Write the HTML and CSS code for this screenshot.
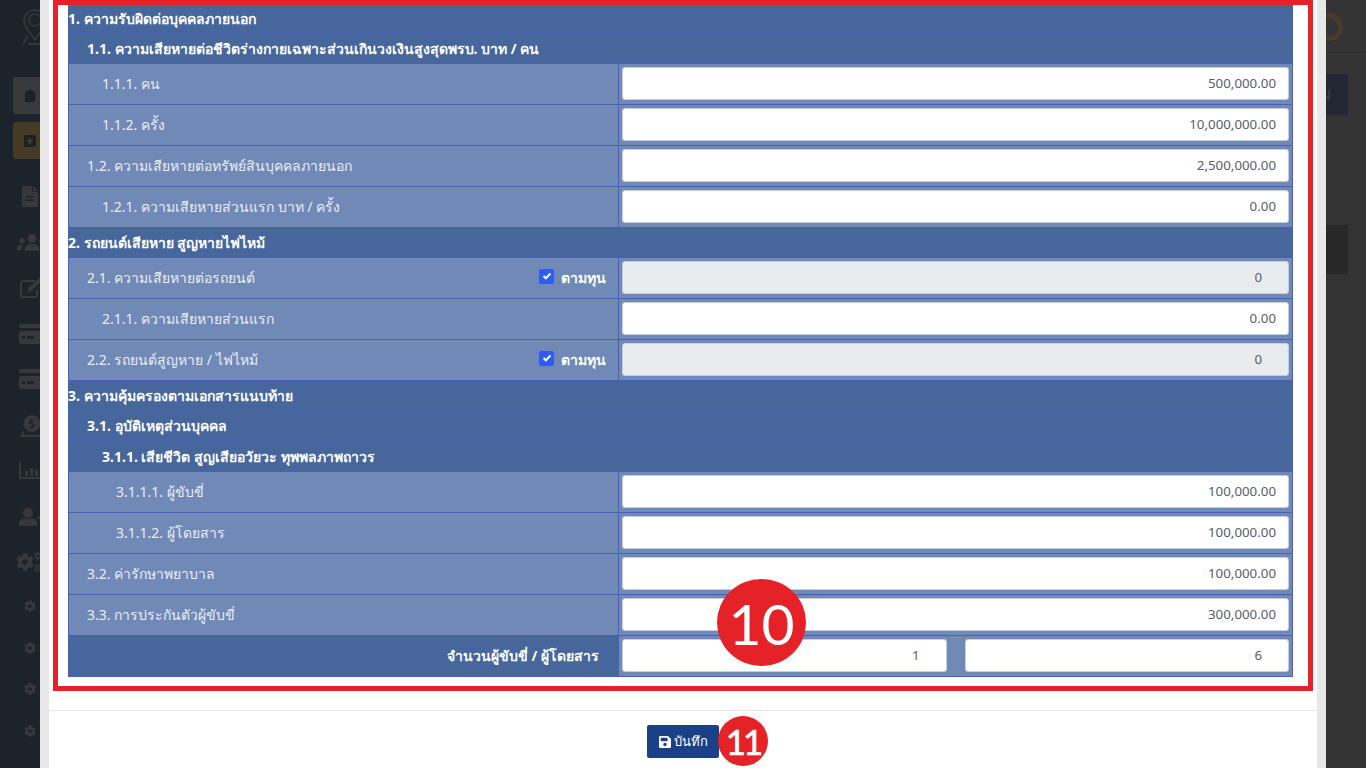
FILE: index.html
```html
<!DOCTYPE html>
<html lang="th">
<head>
    <meta charset="UTF-8">
    <title>ความคุ้มครอง</title>
    <link rel="stylesheet" href="styles.css">
</head>
<body>
    <svg class="sprites" aria-hidden="true">
        <symbol id="i-cog" viewBox="0 0 512 512"><path d="M487.4 315.7l-42.6-24.6c4.3-23.2 4.3-47 0-70.2l42.6-24.6c4.9-2.8 7.1-8.6 5.5-14-11.1-35.6-30-67.8-54.7-94.6-3.8-4.1-10-5.1-14.8-2.3L380.8 110c-17.9-15.4-38.5-27.3-60.8-35.1V25.8c0-5.6-3.9-10.5-9.4-11.7-36.7-8.2-74.3-7.8-109.2 0-5.5 1.2-9.4 6.1-9.4 11.7V75c-22.2 7.9-42.8 19.8-60.8 35.1L88.7 85.5c-4.9-2.8-11-1.9-14.8 2.3-24.7 26.7-43.6 58.9-54.7 94.6-1.7 5.4.6 11.2 5.5 14L67.3 221c-4.3 23.2-4.3 47 0 70.2l-42.6 24.6c-4.9 2.8-7.1 8.6-5.5 14 11.1 35.6 30 67.8 54.7 94.6 3.8 4.1 10 5.1 14.8 2.3l42.6-24.6c17.9 15.4 38.5 27.3 60.8 35.1v49.2c0 5.6 3.9 10.5 9.4 11.7 36.7 8.2 74.3 7.8 109.2 0 5.5-1.2 9.4-6.1 9.4-11.7v-49.2c22.2-7.9 42.8-19.8 60.8-35.1l42.6 24.6c4.9 2.8 11 1.9 14.8-2.3 24.7-26.7 43.6-58.9 54.7-94.6 1.5-5.5-.7-11.3-5.6-14.1zM256 336c-44.1 0-80-35.9-80-80s35.9-80 80-80 80 35.9 80 80-35.9 80-80 80z"/></symbol>
        <symbol id="i-card" viewBox="0 0 26 20"><rect x="0" y="0" width="26" height="4" rx="1.5"/><path d="M2 7h22a2 2 0 0 1 2 2v9a2 2 0 0 1-2 2H2a2 2 0 0 1-2-2V9a2 2 0 0 1 2-2zM3 12v3h3v-3zM8 12v3h7v-3z" fill-rule="evenodd"/></symbol>
    </svg>

    <!-- page behind the modal -->
    <div class="page">
        <aside class="sidebar">
            <svg class="logo" viewBox="0 0 26 36" fill="none" stroke="#36383b" stroke-width="1.6"><path d="M13 1a11 11 0 0 1 11 11c0 6-6 11-11 19C8 23 2 18 2 12A11 11 0 0 1 13 1z"/><circle cx="13" cy="11" r="6"/><path d="M1 35l5-8M25 35l-5-8M6 35h14" stroke-width="2"/></svg>
            <div class="side-btn side-btn-gray">
                <svg width="10" height="13" viewBox="0 0 10 13" fill="#1c2128"><path d="M1 2h2.500a1.500 1.500 0 0 1 3 0H9a1 1 0 0 1 1 1v9a1 1 0 0 1-1 1H1a1 1 0 0 1-1-1V3a1 1 0 0 1 1-1z"/></svg>
            </div>
            <div class="side-btn side-btn-orange">
                <svg width="12" height="12" viewBox="0 0 12 12" fill="#1c2128"><path d="M1.500 0h9A1.500 1.500 0 0 1 12 1.500v9a1.500 1.500 0 0 1-1.500 1.500h-9A1.500 1.500 0 0 1 0 10.500v-9A1.500 1.500 0 0 1 1.500 0zM5 3v2H3v2h2v2h2V7h2V5H7V3z" fill-rule="evenodd"/></svg>
            </div>
            <svg class="nav-icon nav-file" viewBox="0 0 16 21"><path d="M1 0h9v6h6v14a1 1 0 0 1-1 1H1a1 1 0 0 1-1-1V1a1 1 0 0 1 1-1zM11 0l5 5h-5zM4 10v1.500h8V10zM4 13.500V15h8v-1.500z" fill-rule="evenodd"/></svg>
            <svg class="nav-icon nav-users" viewBox="0 0 30 17"><circle cx="15" cy="4.500" r="4.500"/><path d="M8 17v-2c0-3 2.500-5 5-5h4c2.500 0 5 2 5 5v2z"/><circle cx="5" cy="7" r="2.800"/><circle cx="25" cy="7" r="2.800"/><path d="M0 16v-2c0-2 1.500-3 3-3h3c-1 1-1.500 2.500-1.500 5zM30 16v-2c0-2-1.500-3-3-3h-3c1 1 1.500 2.500 1.500 5z"/></svg>
            <svg class="nav-icon nav-edit" viewBox="0 0 24 20" fill="none" stroke="#36383b" stroke-width="2.200"><path d="M15 3H3a2 2 0 0 0-2 2v12a2 2 0 0 0 2 2h12a2 2 0 0 0 2-2v-5"/><path d="M8 12l1 0L22 0" stroke-width="4"/></svg>
            <svg class="nav-icon nav-card"><use href="#i-card"/></svg>
            <svg class="nav-icon nav-card-2"><use href="#i-card"/></svg>
            <svg class="nav-icon nav-money" viewBox="0 0 24 22"><path d="M12 0a8.500 8.500 0 1 1 0 17 8.500 8.500 0 0 1 0-17zM11 3v1.500C9.500 5 8.800 6 8.800 7c0 2.500 4.500 2 4.500 3.300 0 .7-1 .8-2.800.3v1.700l.6.100V14h1.700v-1.600c1.400-.4 2.100-1.300 2.100-2.300 0-2.500-4.400-2.100-4.400-3.200 0-.7 1-.8 2.600-.3V4.900l-.9-.2V3z" fill-rule="evenodd"/><path d="M0 19.500h24V22H0z"/><path d="M2 16h2v4H2z"/></svg>
            <svg class="nav-icon nav-chart" viewBox="0 0 26 17"><path d="M0 0h2v15h24v2H0z"/><path d="M6 9h3v5H6zM11 6h3v8h-3zM16 8h3v6h-3zM21 3h3v11h-3z"/></svg>
            <svg class="nav-icon nav-user" viewBox="0 0 26 18"><circle cx="9" cy="5" r="5"/><path d="M0 18v-2.500C0 12.500 2.500 10.500 5 10.500h8c2.500 0 5 2 5 5V18z"/><path d="M21 6h2v3h3v2h-3v3h-2v-3h-3V9h3z"/></svg>
            <div class="nav-cogs">
                <svg class="cog-big"><use href="#i-cog"/></svg>
                <svg class="cog-top"><use href="#i-cog"/></svg>
                <svg class="cog-bot"><use href="#i-cog"/></svg>
            </div>
            <svg class="nav-sub"><use href="#i-cog"/></svg>
            <svg class="nav-sub"><use href="#i-cog"/></svg>
            <svg class="nav-sub"><use href="#i-cog"/></svg>
            <svg class="nav-sub"><use href="#i-cog"/></svg>
        </aside>
        <main class="content">
            <div class="topbar"><span class="avatar"></span></div>
            <div class="content-btn"><span>N</span></div>
            <div class="content-block"></div>
        </main>
    </div>

    <div class="modal">
        <div class="modal-inner">
            <div class="modal-body">
                <div class="mark-box">
                    <table class="cover">
                        <colgroup><col class="col-label"><col></colgroup>
                        <tr class="head head-first"><td colspan="2">1. ความรับผิดต่อบุคคลภายนอก</td></tr>
                        <tr class="head head-tall"><td colspan="2" class="lv1">1.1. ความเสียหายต่อชีวิตร่างกายเฉพาะส่วนเกินวงเงินสูงสุดพรบ. บาท / คน</td></tr>
                        <tr><td class="label lv2">1.1.1. คน</td><td class="val"><input class="amount" value="500,000.00"></td></tr>
                        <tr><td class="label lv2">1.1.2. ครั้ง</td><td class="val"><input class="amount" value="10,000,000.00"></td></tr>
                        <tr><td class="label lv1">1.2. ความเสียหายต่อทรัพย์สินบุคคลภายนอก</td><td class="val"><input class="amount" value="2,500,000.00"></td></tr>
                        <tr><td class="label lv2">1.2.1. ความเสียหายส่วนแรก บาท / ครั้ง</td><td class="val"><input class="amount" value="0.00"></td></tr>
                        <tr class="head"><td colspan="2">2. รถยนต์เสียหาย สูญหายไฟไหม้</td></tr>
                        <tr>
                            <td class="label lv1"><div class="split">2.1. ความเสียหายต่อรถยนต์
                                <span class="full"><span class="check"><svg width="10" height="8" viewBox="0 0 10 8" fill="none" stroke="#fff" stroke-width="2"><path d="M1.500 4l2.300 2.300L8.500 1.500"/></svg></span>ตามทุน</span></div></td>
                            <td class="val"><input class="amount num" value="0" disabled></td>
                        </tr>
                        <tr><td class="label lv2">2.1.1. ความเสียหายส่วนแรก</td><td class="val"><input class="amount" value="0.00"></td></tr>
                        <tr>
                            <td class="label lv1"><div class="split">2.2. รถยนต์สูญหาย / ไฟไหม้
                                <span class="full"><span class="check"><svg width="10" height="8" viewBox="0 0 10 8" fill="none" stroke="#fff" stroke-width="2"><path d="M1.500 4l2.300 2.300L8.500 1.500"/></svg></span>ตามทุน</span></div></td>
                            <td class="val"><input class="amount num" value="0" disabled></td>
                        </tr>
                        <tr class="head"><td colspan="2">3. ความคุ้มครองตามเอกสารแนบท้าย</td></tr>
                        <tr class="head"><td colspan="2" class="lv1">3.1. อุบัติเหตุส่วนบุคคล</td></tr>
                        <tr class="head head-tall"><td colspan="2" class="lv2">3.1.1. เสียชีวิต สูญเสียอวัยวะ ทุพพลภาพถาวร</td></tr>
                        <tr><td class="label lv3">3.1.1.1. ผู้ขับขี่</td><td class="val"><input class="amount" value="100,000.00"></td></tr>
                        <tr><td class="label lv3">3.1.1.2. ผู้โดยสาร</td><td class="val"><input class="amount" value="100,000.00"></td></tr>
                        <tr><td class="label lv1">3.2. ค่ารักษาพยาบาล</td><td class="val"><input class="amount" value="100,000.00"></td></tr>
                        <tr><td class="label lv1">3.3. การประกันตัวผู้ขับขี่</td><td class="val"><input class="amount" value="300,000.00"></td></tr>
                        <tr>
                            <td class="total">จำนวนผู้ขับขี่ / ผู้โดยสาร</td>
                            <td class="val"><div class="pair"><input class="amount num" value="1"><input class="amount num" value="6"></div></td>
                        </tr>
                    </table>
                </div>
            </div>
            <div class="modal-footer">
                <button class="btn-save" type="button">
                    <svg width="12" height="14" viewBox="0 0 448 512" fill="#fff"><path d="M433.941 129.941l-83.882-83.882A48 48 0 0 0 316.118 32H48C21.49 32 0 53.49 0 80v352c0 26.51 21.49 48 48 48h352c26.51 0 48-21.49 48-48V163.882a48 48 0 0 0-14.059-33.941zM224 416c-35.346 0-64-28.654-64-64 0-35.346 28.654-64 64-64s64 28.654 64 64c0 35.346-28.654 64-64 64zm96-304.52V212c0 6.627-5.373 12-12 12H76c-6.627 0-12-5.373-12-12V108c0-6.627 5.373-12 12-12h228.52c3.183 0 6.235 1.264 8.485 3.515l3.48 3.48A11.996 11.996 0 0 1 320 111.48z"/></svg>
                    บันทึก
                </button>
            </div>
        </div>
    </div>

    <!-- numbered callouts -->
    <div class="badge badge-10">10</div>
    <div class="badge badge-11">11</div>
</body>
</html>
```
FILE: styles.css
```css
html, body {
    height: 100%;
}
body {
    margin: 0;
    overflow: hidden;
    font-family: "Noto Sans", "Open Sans", sans-serif;
    font-size: 14px;
    background-color: #333;
}
.sprites {
    display: none;
}

/* page behind the modal */
.page {
    display: flex;
    height: 768px;
}
.sidebar {
    width: 60px;
    flex-shrink: 0;
    display: flex;
    flex-direction: column;
    align-items: center;
    background-color: #1d232b;
    fill: #36383b;
}
.sidebar svg {
    display: block;
    flex-shrink: 0;
}
.logo {
    width: 26px;
    height: 36px;
    margin-top: 9px;
    margin-left: 10px;
}
.side-btn {
    width: 34px;
    height: 37px;
    margin-top: 8px;
    border-radius: 3px;
    display: flex;
    align-items: center;
    justify-content: center;
}
.side-btn:first-of-type {
    margin-top: 32px;
}
.side-btn-gray {
    background-color: #38393b;
}
.side-btn-orange {
    background-color: #453a24;
}
.nav-icon {
    margin-left: 4px;
}
.nav-file { width: 16px; height: 21px; margin-top: 27px; margin-left: 0; }
.nav-users { width: 30px; height: 17px; margin-top: 27px; }
.nav-edit { width: 24px; height: 20px; margin-top: 27px; }
.nav-card { width: 26px; height: 20px; margin-top: 26px; }
.nav-card-2 { width: 26px; height: 20px; margin-top: 25px; }
.nav-money { width: 24px; height: 22px; margin-top: 26px; }
.nav-chart { width: 26px; height: 17px; margin-top: 25px; }
.nav-user { width: 26px; height: 18px; margin-top: 29px; }
.nav-cogs {
    position: relative;
    width: 28px;
    height: 20px;
    margin-top: 26px;
}
.cog-big { position: absolute; left: 0; top: 1px; width: 18px; height: 18px; }
.cog-top { position: absolute; left: 18px; top: 0; width: 8px; height: 8px; }
.cog-bot { position: absolute; left: 18px; top: 12px; width: 8px; height: 8px; }
.nav-sub {
    width: 12px;
    height: 12px;
    margin-top: 29.500px;
}
.nav-cogs + .nav-sub {
    margin-top: 28px;
}
.content {
    flex: 1;
}
.topbar {
    height: 54px;
    border-bottom: 1px solid #3a3a3a;
    display: flex;
    justify-content: flex-end;
    padding-right: 23px;
    align-items: center;
}
.avatar {
    width: 18px;
    height: 18px;
    border: 5px solid #4a3a2b;
    border-radius: 50%;
}
.content-btn {
    width: 80px;
    height: 41px;
    margin: 19px 18px 0 auto;
    background-color: #212833;
    color: #3f444b;
    border-radius: 2px;
    display: flex;
    align-items: center;
    justify-content: flex-end;
    padding-right: 17px;
    box-sizing: border-box;
}
.content-block {
    width: 80px;
    height: 49px;
    margin: 110px 18px 0 auto;
    background-color: #282828;
}

/* modal */
.modal {
    position: fixed;
    top: 0;
    bottom: 0;
    left: 40px;
    width: 1286px;
    padding: 0 9px;
    box-sizing: border-box;
    background-color: #e8e8e8;
    overflow: hidden;
}
.modal-inner {
    background-color: #fff;
    height: 100%;
}
.modal-body {
    padding: 0 4px;
    height: 710px;
    box-sizing: border-box;
}
.mark-box {
    border: 5px solid #e52227;
    padding: 0 15px 9px 10px;
}
.cover {
    width: 100%;
    border-collapse: collapse;
    table-layout: fixed;
    color: #fff;
    font-size: 14px;
}
.col-label {
    width: 550px;
}
.cover td {
    border: 1px solid #4a5fb5;
    padding: 3px;
    height: 34px;
    box-sizing: border-box;
    background-color: #7089b6;
}
.cover .val {
    height: 41px;
}
.cover .head td {
    background-color: #46669c;
    font-weight: bold;
    height: 30px;
    padding: 2px 0 0;
    line-height: 20px;
    text-indent: -1px;
}
.cover .head-first td {
    height: 27px;
    border-top: 0;
}
.cover .head-tall td {
    height: 31px;
}
.cover .head .lv1 { padding-left: 19px; }
.cover .head .lv2 { padding-left: 34px; }
.cover .label {
    padding: 0 12px 0 0;
    color: #e8edf6;
}
.cover .lv1 { padding-left: 18px; }
.cover .lv2 { padding-left: 33px; }
.cover .lv3 { padding-left: 47px; }
.split {
    display: flex;
    align-items: center;
    justify-content: space-between;
}
.full {
    display: flex;
    align-items: center;
    color: #fff;
    font-weight: bold;
}
.check {
    width: 15px;
    height: 15px;
    margin-right: 7px;
    margin-top: -3px;
    background-color: #2f5cf5;
    border-radius: 2px;
    display: flex;
    align-items: center;
    justify-content: center;
}
.amount {
    display: block;
    flex: 1;
    min-width: 0;
    width: 100%;
    height: 33px;
    padding: 0 12px 2px;
    box-sizing: border-box;
    border: 1px solid #c5cde0;
    border-radius: 3px;
    background-color: #fff;
    color: #5a5c69;
    font-family: inherit;
    font-size: 13.300px;
    text-align: right;
    opacity: 1;
}
.amount.num {
    padding-right: 26px;
}
.amount:disabled {
    background-color: #e9ecef;
}
.pair {
    display: flex;
    gap: 18px;
}
.cover .total {
    background-color: #46669c;
    font-weight: bold;
    text-align: right;
    padding-right: 19px;
}

/* footer */
.modal-footer {
    height: 58px;
    border-top: 1px solid #e6e6e6;
    display: flex;
    align-items: flex-start;
    justify-content: center;
    padding-top: 14px;
    box-sizing: border-box;
}
.btn-save {
    height: 33px;
    width: 72px;
    padding: 0;
    border: none;
    border-radius: 2px;
    background-color: #1a4185;
    color: #fff;
    font-family: inherit;
    font-size: 13px;
    display: flex;
    align-items: center;
    justify-content: center;
    gap: 3px;
}

/* callouts */
.badge {
    position: fixed;
    display: flex;
    align-items: center;
    justify-content: center;
    border-radius: 50%;
    background-color: #e52227;
    color: #fff;
    font-family: Lato, sans-serif;
}
.badge-10 {
    left: 717px;
    top: 579px;
    width: 89px;
    height: 87px;
    font-size: 57px;
}
.badge-11 {
    left: 718px;
    top: 716px;
    width: 50px;
    height: 50px;
    font-size: 35px;
    letter-spacing: -3px;
    -webkit-text-stroke: 0.6px #fff;
}
```
